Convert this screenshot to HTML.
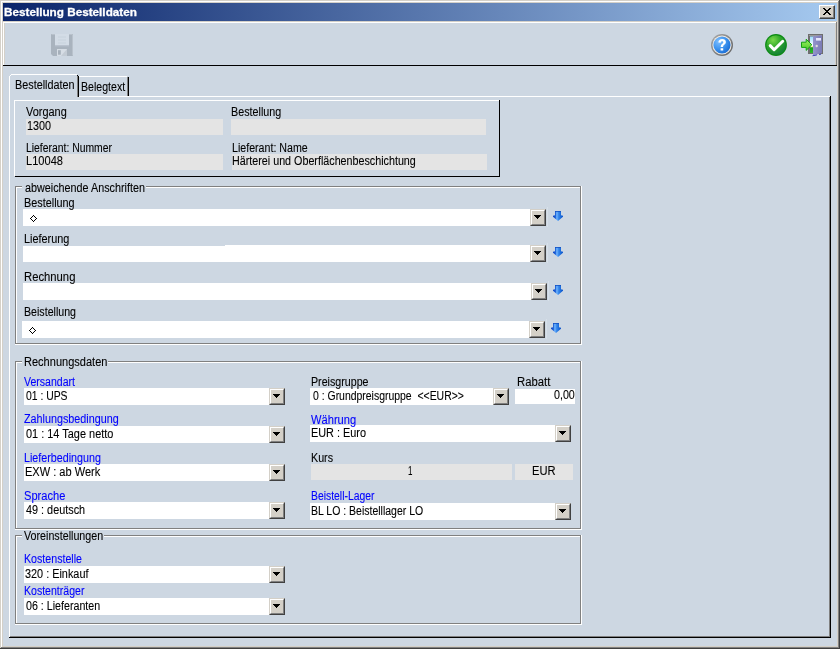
<!DOCTYPE html>
<html><head><meta charset="utf-8"><title>Bestellung Bestelldaten</title>
<style>
html,body{margin:0;padding:0}
body{width:840px;height:649px;position:relative;overflow:hidden;background:#D4D0C8;font-family:"Liberation Sans",sans-serif;font-size:12px;color:#000}
.a,.t,.l,.in,.gf,.btn,svg{position:absolute}
.a{display:block}
.t{white-space:nowrap;line-height:16px;transform-origin:0 0;display:inline-block;-webkit-text-stroke:0.1px currentColor}
.in{background:#fff}
.gf{background:#E4E4E4}
.btn{width:16px;height:17px;box-sizing:border-box;background:#D4D0C8;border-top:1px solid #D4D0C8;border-left:1px solid #D4D0C8;border-right:1px solid #404040;border-bottom:1px solid #404040}
.btn:before{content:"";position:absolute;left:0;top:0;width:13px;height:14px;border-top:1px solid #fff;border-left:1px solid #fff;border-right:1px solid #808080;border-bottom:1px solid #808080;box-sizing:content-box;width:12px;height:13px}
.w{background:#fff}.k{background:#000}.g{background:#808080}
</style></head><body>
<div class="a w" style="left:1px;top:1px;width:837px;height:1px;"></div>
<div class="a w" style="left:1px;top:1px;width:1px;height:646px;"></div>
<div class="a g" style="left:838px;top:1px;width:1px;height:647px;"></div>
<div class="a g" style="left:1px;top:647px;width:838px;height:1px;"></div>
<div class="a " style="left:839px;top:0px;width:1px;height:649px;background:#404040"></div>
<div class="a " style="left:0px;top:648px;width:840px;height:1px;background:#404040"></div>
<div class="a " style="left:3px;top:3px;width:834px;height:18px;background:linear-gradient(to right,#0A246A,#A6CAF0)"></div>
<div class="a " style="left:3px;top:22px;width:834px;height:624px;background:#CDD7E2"></div>
<div class="a" style="left:819px;top:5px;width:16px;height:14px;box-sizing:border-box;background:#D4D0C8;border-top:1px solid #fff;border-left:1px solid #fff;border-right:1px solid #404040;border-bottom:1px solid #404040"><div class="a" style="left:0;top:0;width:13px;height:11px;border-right:1px solid #808080;border-bottom:1px solid #808080"></div><svg style="left:3px;top:2px" width="8" height="7" viewBox="0 0 8 7" shape-rendering="crispEdges"><path d="M0 0h2v1h1v1h2v-1h1v-1h2v1h-1v1h-1v1h-1v1h1v1h1v1h1v1h-2v-1h-1v-1h-2v1h-1v1h-2v-1h1v-1h1v-1h1v-1h-1v-1h-1v-1h-1z" fill="#000"/></svg></div>
<div class="a w" style="left:3px;top:22px;width:833px;height:1px;"></div>
<div class="a w" style="left:3px;top:22px;width:1px;height:43px;"></div>
<div class="a " style="left:4px;top:23px;width:1px;height:41px;background:#D4D0C8"></div>
<div class="a " style="left:835px;top:23px;width:1px;height:42px;background:#D4D0C8"></div>
<div class="a g" style="left:836px;top:22px;width:1px;height:43px;"></div>
<div class="a k" style="left:3px;top:65px;width:834px;height:1px;"></div>
<div class="a w" style="left:9px;top:76px;width:1px;height:561px;"></div>
<div class="a w" style="left:10px;top:75px;width:1px;height:1px;"></div>
<div class="a w" style="left:11px;top:74px;width:66px;height:1px;"></div>
<div class="a k" style="left:77px;top:75px;width:1px;height:1px;"></div>
<div class="a g" style="left:77px;top:76px;width:1px;height:21px;"></div>
<div class="a k" style="left:78px;top:76px;width:1px;height:21px;"></div>
<div class="a w" style="left:79px;top:76px;width:48px;height:1px;"></div>
<div class="a g" style="left:127px;top:77px;width:1px;height:19px;"></div>
<div class="a k" style="left:128px;top:77px;width:1px;height:19px;"></div>
<div class="a w" style="left:79px;top:96px;width:751px;height:1px;"></div>
<div class="a g" style="left:829px;top:97px;width:1px;height:540px;"></div>
<div class="a g" style="left:10px;top:636px;width:820px;height:1px;"></div>
<div class="a k" style="left:830px;top:96px;width:1px;height:542px;"></div>
<div class="a k" style="left:9px;top:637px;width:822px;height:1px;"></div>
<div class="a w" style="left:14px;top:100px;width:485px;height:1px;"></div>
<div class="a w" style="left:14px;top:100px;width:1px;height:76px;"></div>
<div class="a k" style="left:499px;top:100px;width:1px;height:77px;"></div>
<div class="a k" style="left:15px;top:176px;width:485px;height:1px;"></div>
<div class="a gf" style="left:26px;top:119px;width:197px;height:16px;"></div>
<div class="a gf" style="left:231px;top:119px;width:255px;height:16px;"></div>
<div class="a gf" style="left:26px;top:154px;width:197px;height:16px;"></div>
<div class="a gf" style="left:232px;top:154px;width:255px;height:16px;"></div>
<div class="a g" style="left:15px;top:186px;width:7px;height:1px;"></div>
<div class="a g" style="left:146px;top:186px;width:435px;height:1px;"></div>
<div class="a w" style="left:16px;top:187px;width:6px;height:1px;"></div>
<div class="a w" style="left:146px;top:187px;width:434px;height:1px;"></div>
<div class="a g" style="left:15px;top:186px;width:1px;height:158px;"></div>
<div class="a w" style="left:16px;top:187px;width:1px;height:156px;"></div>
<div class="a g" style="left:580px;top:186px;width:1px;height:158px;"></div>
<div class="a w" style="left:581px;top:186px;width:1px;height:159px;"></div>
<div class="a g" style="left:15px;top:343px;width:566px;height:1px;"></div>
<div class="a w" style="left:15px;top:344px;width:567px;height:1px;"></div>
<div class="a g" style="left:15px;top:361px;width:7px;height:1px;"></div>
<div class="a g" style="left:108px;top:361px;width:473px;height:1px;"></div>
<div class="a w" style="left:16px;top:362px;width:6px;height:1px;"></div>
<div class="a w" style="left:108px;top:362px;width:472px;height:1px;"></div>
<div class="a g" style="left:15px;top:361px;width:1px;height:168px;"></div>
<div class="a w" style="left:16px;top:362px;width:1px;height:166px;"></div>
<div class="a g" style="left:580px;top:361px;width:1px;height:168px;"></div>
<div class="a w" style="left:581px;top:361px;width:1px;height:169px;"></div>
<div class="a g" style="left:15px;top:528px;width:566px;height:1px;"></div>
<div class="a w" style="left:15px;top:529px;width:567px;height:1px;"></div>
<div class="a g" style="left:15px;top:535px;width:7px;height:1px;"></div>
<div class="a g" style="left:104px;top:535px;width:477px;height:1px;"></div>
<div class="a w" style="left:16px;top:536px;width:6px;height:1px;"></div>
<div class="a w" style="left:104px;top:536px;width:476px;height:1px;"></div>
<div class="a g" style="left:15px;top:535px;width:1px;height:89px;"></div>
<div class="a w" style="left:16px;top:536px;width:1px;height:87px;"></div>
<div class="a g" style="left:580px;top:535px;width:1px;height:89px;"></div>
<div class="a w" style="left:581px;top:535px;width:1px;height:90px;"></div>
<div class="a g" style="left:15px;top:623px;width:566px;height:1px;"></div>
<div class="a w" style="left:15px;top:624px;width:567px;height:1px;"></div>
<div class="a in" style="left:23px;top:209px;width:507px;height:17px;"></div>
<div class="btn" style="left:530px;top:209px;height:17px"><svg style="left:3px;top:5px" width="7" height="4" viewBox="0 0 7 4" shape-rendering="crispEdges"><path d="M0 0h7v1h-1v1h-1v1h-1v1h-1v-1h-1v-1h-1v-1h-1z" fill="#000"/></svg></div>
<svg style="left:553px;top:211px" width="10" height="10" viewBox="0 0 10 10"><defs><linearGradient id="ag1" x1="0" y1="0" x2="1" y2="0"><stop offset="0" stop-color="#0A40C0"/><stop offset=".24" stop-color="#1C60D6"/><stop offset=".38" stop-color="#74B8FF"/><stop offset=".55" stop-color="#3A8AEC"/><stop offset=".8" stop-color="#1868D8"/><stop offset="1" stop-color="#0C50C8"/></linearGradient></defs><path d="M2 0h6v4.3l2 .5v1l-5 4.2l-5-4.2v-1l2-.5z" fill="url(#ag1)"/><path d="M2 0h6v1h-6z" fill="#1450C0" opacity=".8"/></svg>
<div class="a " style="left:547px;top:207px;width:1px;height:20px;background:#D7E0E9"></div>
<div class="a in" style="left:23px;top:245px;width:507px;height:17px;"></div>
<div class="btn" style="left:530px;top:245px;height:17px"><svg style="left:3px;top:5px" width="7" height="4" viewBox="0 0 7 4" shape-rendering="crispEdges"><path d="M0 0h7v1h-1v1h-1v1h-1v1h-1v-1h-1v-1h-1v-1h-1z" fill="#000"/></svg></div>
<svg style="left:553px;top:247px" width="10" height="10" viewBox="0 0 10 10"><defs><linearGradient id="ag2" x1="0" y1="0" x2="1" y2="0"><stop offset="0" stop-color="#0A40C0"/><stop offset=".24" stop-color="#1C60D6"/><stop offset=".38" stop-color="#74B8FF"/><stop offset=".55" stop-color="#3A8AEC"/><stop offset=".8" stop-color="#1868D8"/><stop offset="1" stop-color="#0C50C8"/></linearGradient></defs><path d="M2 0h6v4.3l2 .5v1l-5 4.2l-5-4.2v-1l2-.5z" fill="url(#ag2)"/><path d="M2 0h6v1h-6z" fill="#1450C0" opacity=".8"/></svg>
<div class="a " style="left:547px;top:243px;width:1px;height:20px;background:#D7E0E9"></div>
<div class="a " style="left:23px;top:245px;width:202px;height:1px;background:#CDD7E2"></div>
<div class="a in" style="left:23px;top:283px;width:508px;height:17px;"></div>
<div class="btn" style="left:531px;top:283px;height:17px"><svg style="left:3px;top:5px" width="7" height="4" viewBox="0 0 7 4" shape-rendering="crispEdges"><path d="M0 0h7v1h-1v1h-1v1h-1v1h-1v-1h-1v-1h-1v-1h-1z" fill="#000"/></svg></div>
<svg style="left:553px;top:285px" width="10" height="10" viewBox="0 0 10 10"><defs><linearGradient id="ag3" x1="0" y1="0" x2="1" y2="0"><stop offset="0" stop-color="#0A40C0"/><stop offset=".24" stop-color="#1C60D6"/><stop offset=".38" stop-color="#74B8FF"/><stop offset=".55" stop-color="#3A8AEC"/><stop offset=".8" stop-color="#1868D8"/><stop offset="1" stop-color="#0C50C8"/></linearGradient></defs><path d="M2 0h6v4.3l2 .5v1l-5 4.2l-5-4.2v-1l2-.5z" fill="url(#ag3)"/><path d="M2 0h6v1h-6z" fill="#1450C0" opacity=".8"/></svg>
<div class="a " style="left:548px;top:281px;width:1px;height:20px;background:#D7E0E9"></div>
<div class="a in" style="left:22px;top:321px;width:507px;height:17px;"></div>
<div class="btn" style="left:529px;top:321px;height:17px"><svg style="left:3px;top:5px" width="7" height="4" viewBox="0 0 7 4" shape-rendering="crispEdges"><path d="M0 0h7v1h-1v1h-1v1h-1v1h-1v-1h-1v-1h-1v-1h-1z" fill="#000"/></svg></div>
<svg style="left:551px;top:323px" width="10" height="10" viewBox="0 0 10 10"><defs><linearGradient id="ag4" x1="0" y1="0" x2="1" y2="0"><stop offset="0" stop-color="#0A40C0"/><stop offset=".24" stop-color="#1C60D6"/><stop offset=".38" stop-color="#74B8FF"/><stop offset=".55" stop-color="#3A8AEC"/><stop offset=".8" stop-color="#1868D8"/><stop offset="1" stop-color="#0C50C8"/></linearGradient></defs><path d="M2 0h6v4.3l2 .5v1l-5 4.2l-5-4.2v-1l2-.5z" fill="url(#ag4)"/><path d="M2 0h6v1h-6z" fill="#1450C0" opacity=".8"/></svg>
<div class="a " style="left:546px;top:319px;width:1px;height:20px;background:#D7E0E9"></div>
<svg style="left:30px;top:215px" width="7" height="7" viewBox="0 0 7 7" shape-rendering="crispEdges"><path d="M3 0h1v1h1v1h1v1h1v1h-1v1h-1v1h-1v1h-1v-1h-1v-1h-1v-1h-1v-1h1v-1h1v-1h1z M3 1v1h-1v1h-1v1h1v1h1v1h1v-1h1v-1h1v-1h-1v-1h-1v-1z" fill="#000" fill-rule="evenodd"/></svg>
<svg style="left:29px;top:327px" width="7" height="7" viewBox="0 0 7 7" shape-rendering="crispEdges"><path d="M3 0h1v1h1v1h1v1h1v1h-1v1h-1v1h-1v1h-1v-1h-1v-1h-1v-1h-1v-1h1v-1h1v-1h1z M3 1v1h-1v1h-1v1h1v1h1v1h1v-1h1v-1h1v-1h-1v-1h-1v-1z" fill="#000" fill-rule="evenodd"/></svg>
<div class="a in" style="left:24px;top:388px;width:245px;height:17px;"></div>
<div class="btn" style="left:269px;top:388px;height:17px"><svg style="left:3px;top:5px" width="7" height="4" viewBox="0 0 7 4" shape-rendering="crispEdges"><path d="M0 0h7v1h-1v1h-1v1h-1v1h-1v-1h-1v-1h-1v-1h-1z" fill="#000"/></svg></div>
<div class="a in" style="left:24px;top:426px;width:245px;height:17px;"></div>
<div class="btn" style="left:269px;top:426px;height:17px"><svg style="left:3px;top:5px" width="7" height="4" viewBox="0 0 7 4" shape-rendering="crispEdges"><path d="M0 0h7v1h-1v1h-1v1h-1v1h-1v-1h-1v-1h-1v-1h-1z" fill="#000"/></svg></div>
<div class="a in" style="left:24px;top:464px;width:245px;height:17px;"></div>
<div class="btn" style="left:269px;top:464px;height:17px"><svg style="left:3px;top:5px" width="7" height="4" viewBox="0 0 7 4" shape-rendering="crispEdges"><path d="M0 0h7v1h-1v1h-1v1h-1v1h-1v-1h-1v-1h-1v-1h-1z" fill="#000"/></svg></div>
<div class="a in" style="left:24px;top:502px;width:245px;height:17px;"></div>
<div class="btn" style="left:269px;top:502px;height:17px"><svg style="left:3px;top:5px" width="7" height="4" viewBox="0 0 7 4" shape-rendering="crispEdges"><path d="M0 0h7v1h-1v1h-1v1h-1v1h-1v-1h-1v-1h-1v-1h-1z" fill="#000"/></svg></div>
<div class="a in" style="left:310px;top:388px;width:183px;height:17px;"></div>
<div class="btn" style="left:493px;top:388px;height:17px"><svg style="left:3px;top:5px" width="7" height="4" viewBox="0 0 7 4" shape-rendering="crispEdges"><path d="M0 0h7v1h-1v1h-1v1h-1v1h-1v-1h-1v-1h-1v-1h-1z" fill="#000"/></svg></div>
<div class="a in" style="left:515px;top:389px;width:60px;height:15px;"></div>
<div class="a in" style="left:310px;top:425px;width:245px;height:17px;"></div>
<div class="btn" style="left:555px;top:425px;height:17px"><svg style="left:3px;top:5px" width="7" height="4" viewBox="0 0 7 4" shape-rendering="crispEdges"><path d="M0 0h7v1h-1v1h-1v1h-1v1h-1v-1h-1v-1h-1v-1h-1z" fill="#000"/></svg></div>
<div class="a gf" style="left:311px;top:464px;width:201px;height:16px;"></div>
<div class="a gf" style="left:515px;top:464px;width:58px;height:16px;"></div>
<div class="a in" style="left:310px;top:503px;width:245px;height:17px;"></div>
<div class="btn" style="left:555px;top:503px;height:17px"><svg style="left:3px;top:5px" width="7" height="4" viewBox="0 0 7 4" shape-rendering="crispEdges"><path d="M0 0h7v1h-1v1h-1v1h-1v1h-1v-1h-1v-1h-1v-1h-1z" fill="#000"/></svg></div>
<div class="a in" style="left:24px;top:566px;width:245px;height:17px;"></div>
<div class="btn" style="left:269px;top:566px;height:17px"><svg style="left:3px;top:5px" width="7" height="4" viewBox="0 0 7 4" shape-rendering="crispEdges"><path d="M0 0h7v1h-1v1h-1v1h-1v1h-1v-1h-1v-1h-1v-1h-1z" fill="#000"/></svg></div>
<div class="a in" style="left:24px;top:598px;width:245px;height:17px;"></div>
<div class="btn" style="left:269px;top:598px;height:17px"><svg style="left:3px;top:5px" width="7" height="4" viewBox="0 0 7 4" shape-rendering="crispEdges"><path d="M0 0h7v1h-1v1h-1v1h-1v1h-1v-1h-1v-1h-1v-1h-1z" fill="#000"/></svg></div>
<svg style="left:51px;top:34px" width="22" height="22" viewBox="0 0 22 22">
<path d="M0 0h22v22h-20l-2-2z" fill="#A9B3BE"/>
<path d="M0.5 0.5h21v21" fill="none" stroke="#B9C2CC" stroke-width="1"/>
<rect x="4" y="0" width="14" height="11.5" fill="#D3DCE6"/>
<rect x="4" y="11.5" width="14" height="1" fill="#B4BEC9"/>
<rect x="7" y="2.5" width="8" height="1" fill="#C8D1DB"/><rect x="7" y="5.5" width="8" height="1" fill="#C8D1DB"/><rect x="7" y="8.5" width="8" height="1" fill="#C8D1DB"/>
<rect x="6" y="15" width="10" height="7" fill="#D6DDE5"/>
<rect x="7" y="16.2" width="2.8" height="4.5" fill="#A6B0BB"/>
<path d="M10 22l6-7v7z" fill="#C3CBD4"/>
</svg>
<svg style="left:711px;top:34px" width="22" height="22" viewBox="0 0 22 22">
<defs><radialGradient id="hb" cx="0.32" cy="0.3" r="0.8"><stop offset="0" stop-color="#7FC0FF"/><stop offset=".55" stop-color="#3C92EE"/><stop offset="1" stop-color="#1668D0"/></radialGradient>
<linearGradient id="hr" x1="0" y1="0" x2="1" y2="1"><stop offset="0" stop-color="#ABABAB"/><stop offset="1" stop-color="#5E5E5E"/></linearGradient></defs>
<circle cx="11" cy="11" r="11" fill="url(#hr)"/>
<circle cx="11" cy="11" r="9.55" fill="#F2ECE4"/>
<circle cx="11" cy="11" r="8.6" fill="url(#hb)"/>
<path d="M7.4 8.6c0-2.2 1.6-3.5 3.8-3.5c2.2 0 3.7 1.2 3.7 3c0 1.5-0.9 2.2-1.8 2.9c-0.7 0.5-1 0.9-1 1.9h-2.4c0-1.6 0.5-2.3 1.4-3c0.7-0.5 1.2-0.9 1.2-1.6c0-0.6-0.5-1-1.2-1c-0.8 0-1.3 0.5-1.4 1.5z M9.6 14.2h2.6v2.3h-2.6z" fill="#fff"/>
</svg>
<svg style="left:765px;top:34px" width="22" height="22" viewBox="0 0 22 22">
<defs><radialGradient id="cg" cx="0.35" cy="0.25" r="0.85"><stop offset="0" stop-color="#7AD84A"/><stop offset=".45" stop-color="#2FA82A"/><stop offset="1" stop-color="#0F7A3A"/></radialGradient></defs>
<circle cx="11" cy="11" r="10.9" fill="#0B8A12"/>
<circle cx="11" cy="11" r="9.8" fill="url(#cg)"/>
<path d="M5.2 11.6l3.9 4.1l8.6-8.4" fill="none" stroke="#fff" stroke-width="3" stroke-linecap="round" stroke-linejoin="round"/>
</svg>
<svg style="left:801px;top:34px" width="23" height="23" viewBox="0 0 23 23">
<defs><linearGradient id="sky" x1="0" y1="0" x2="0" y2="1"><stop offset="0" stop-color="#9ADCFF"/><stop offset=".55" stop-color="#FFFFFF"/><stop offset=".62" stop-color="#E8F090"/><stop offset=".68" stop-color="#18A018"/><stop offset="1" stop-color="#30B830"/></linearGradient>
<linearGradient id="dr" x1="0" y1="0" x2="1" y2="0"><stop offset="0" stop-color="#9494CC"/><stop offset="1" stop-color="#7A7AB4"/></linearGradient>
<linearGradient id="ar" x1="0" y1="0" x2="0" y2="1"><stop offset="0" stop-color="#9CF060"/><stop offset="1" stop-color="#48C828"/></linearGradient></defs>
<rect x="7" y="0" width="15" height="20" fill="#6E6E6E"/>
<rect x="8" y="1" width="13" height="1" fill="#9A9A9A"/>
<rect x="9" y="2.5" width="4" height="16.5" fill="url(#sky)"/>
<path d="M12 2.3l9-1.1v17.9l-9 2.5z" fill="url(#dr)"/>
<path d="M11.5 21.6l4.5-1.2v.9l-4.5.9z M18 20.3l2-.6v.7l-2 .5z" fill="#2020B0"/>
<rect x="15" y="4" width="5" height="2.6" fill="#E6E6FA"/>
<circle cx="15.7" cy="12" r="1.2" fill="#DCDCDC"/>
<path d="M0.5 8.2h4.7v-3l5.6 5.6l-5.6 5.6v-3h-4.7z" fill="url(#ar)" stroke="#12A012" stroke-width="1" stroke-linejoin="round"/>
</svg>

<div class="a" style="left:0;top:0;width:840px;height:649px;will-change:transform">
<span class="t" style="left:14.60px;top:77px;color:#000;transform:scaleX(0.9031)">Bestelldaten</span>
<span class="t" style="left:81.12px;top:79px;color:#000;transform:scaleX(0.8816)">Belegtext</span>
<span class="t" style="left:26.20px;top:104px;color:#000;transform:scaleX(0.9114)">Vorgang</span>
<span class="t" style="left:26.60px;top:118px;color:#000;transform:scaleX(0.9000)">1300</span>
<span class="t" style="left:231.10px;top:104px;color:#000;transform:scaleX(0.8963)">Bestellung</span>
<span class="t" style="left:26.13px;top:140px;color:#000;transform:scaleX(0.8653)">Lieferant: Nummer</span>
<span class="t" style="left:25.58px;top:153px;color:#000;transform:scaleX(0.9231)">L10048</span>
<span class="t" style="left:231.61px;top:140px;color:#000;transform:scaleX(0.8869)">Lieferant: Name</span>
<span class="t" style="left:231.61px;top:153px;color:#000;transform:scaleX(0.8946)">Härterei und Oberflächenbeschichtung</span>
<span class="t" style="left:25.00px;top:180px;color:#000;transform:scaleX(0.8985)">abweichende Anschriften</span>
<span class="t" style="left:23.60px;top:195px;color:#000;transform:scaleX(0.9037)">Bestellung</span>
<span class="t" style="left:23.59px;top:231px;color:#000;transform:scaleX(0.9062)">Lieferung</span>
<span class="t" style="left:23.56px;top:269px;color:#000;transform:scaleX(0.9396)">Rechnung</span>
<span class="t" style="left:23.61px;top:304px;color:#000;transform:scaleX(0.8860)">Beistellung</span>
<span class="t" style="left:23.58px;top:354px;color:#000;transform:scaleX(0.9191)">Rechnungsdaten</span>
<span class="t" style="left:24.00px;top:374px;color:#0000FF;transform:scaleX(0.8793)">Versandart</span>
<span class="t" style="left:25.50px;top:388px;color:#000;transform:scaleX(0.8646)">01 : UPS</span>
<span class="t" style="left:24.00px;top:411px;color:#0000FF;transform:scaleX(0.8981)">Zahlungsbedingung</span>
<span class="t" style="left:25.50px;top:426px;color:#000;transform:scaleX(0.9115)">01 : 14 Tage netto</span>
<span class="t" style="left:23.61px;top:450px;color:#0000FF;transform:scaleX(0.8941)">Lieferbedingung</span>
<span class="t" style="left:24.58px;top:464px;color:#000;transform:scaleX(0.9198)">EXW : ab Werk</span>
<span class="t" style="left:23.57px;top:488px;color:#0000FF;transform:scaleX(0.9256)">Sprache</span>
<span class="t" style="left:25.50px;top:502px;color:#000;transform:scaleX(0.9046)">49 : deutsch</span>
<span class="t" style="left:310.61px;top:374px;color:#000;transform:scaleX(0.8889)">Preisgruppe</span>
<span class="t" style="left:312.50px;top:388px;color:#000;transform:scaleX(0.8699)">0 : Grundpreisgruppe &nbsp;&lt;&lt;EUR&gt;&gt;</span>
<span class="t" style="left:516.56px;top:374px;color:#000;transform:scaleX(0.9412)">Rabatt</span>
<span class="t" style="left:554.00px;top:387px;color:#000;transform:scaleX(0.8913)">0,00</span>
<span class="t" style="left:311.00px;top:412px;color:#0000FF;transform:scaleX(0.9271)">Währung</span>
<span class="t" style="left:311.09px;top:425px;color:#000;transform:scaleX(0.9068)">EUR : Euro</span>
<span class="t" style="left:311.11px;top:450px;color:#000;transform:scaleX(0.8913)">Kurs</span>
<span class="t" style="left:408.34px;top:463px;color:#000;transform:scaleX(0.6600)">1</span>
<span class="t" style="left:531.57px;top:463px;color:#000;transform:scaleX(0.9292)">EUR</span>
<span class="t" style="left:311.13px;top:488px;color:#0000FF;transform:scaleX(0.8653)">Beistell-Lager</span>
<span class="t" style="left:311.13px;top:503px;color:#000;transform:scaleX(0.8740)">BL LO : Beistelllager LO</span>
<span class="t" style="left:24.00px;top:528px;color:#000;transform:scaleX(0.8920)">Voreinstellungen</span>
<span class="t" style="left:23.61px;top:551px;color:#0000FF;transform:scaleX(0.8875)">Kostenstelle</span>
<span class="t" style="left:24.59px;top:566px;color:#000;transform:scaleX(0.9058)">320 : Einkauf</span>
<span class="t" style="left:23.62px;top:583px;color:#0000FF;transform:scaleX(0.8794)">Kostenträger</span>
<span class="t" style="left:25.50px;top:598px;color:#000;transform:scaleX(0.8892)">06 : Lieferanten</span>
<span class="t" style="left:4.48px;top:4px;color:#fff;font-weight:bold;font-size:11.5px;-webkit-text-stroke:.3px #fff;transform:scaleX(1.0194)">Bestellung Bestelldaten</span>
</div>
</body></html>
